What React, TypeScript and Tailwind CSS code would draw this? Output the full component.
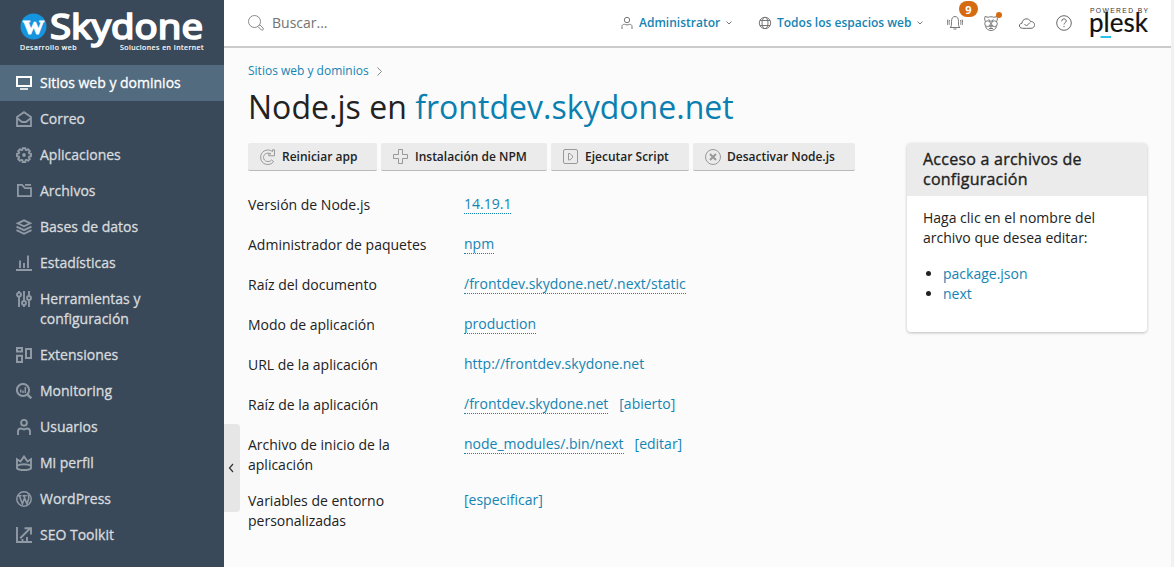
import type { ReactNode } from 'react';

type IconProps = { children: ReactNode; className?: string; size?: number };

function Icon({ children, className = '', size = 16 }: IconProps) {
  return (
    <svg width={size} height={size} viewBox={`0 0 ${size} ${size}`} fill="none" stroke="currentColor" className={`shrink-0 ${className}`}>
      {children}
    </svg>
  );
}

type NavItem = { label: string; icon: ReactNode; active?: boolean };

const navItems: NavItem[] = [
  {
    label: 'Sitios web y dominios',
    active: true,
    icon: (
      <>
        <path d="M1 2h14v9H1z" strokeWidth="2" />
        <path d="M4 14h8" strokeWidth="1.6" />
      </>
    ),
  },
  { label: 'Correo', icon: <path d="M1 6v9h14V6L8 1.2zM1.3 7.2 6 11h4l4.7-3.8" strokeWidth="1.8" /> },
  {
    label: 'Aplicaciones',
    icon: (
      <>
        <path d="M6.700 1.200h2.600l.3 1.700 1 .4 1.500-1 1.700 1.700-1 1.500.4 1 1.800.3v2.400l-1.800.4-.4 1 1 1.500-1.700 1.700-1.500-1-1 .4-.3 1.800H6.700l-.3-1.800-1-.4-1.500 1-1.700-1.700 1-1.500-.4-1L1 9.200V6.800l1.800-.3.4-1-1-1.500 1.700-1.700 1.500 1 1-.4z" strokeWidth="1.900" />
        <circle cx="8" cy="8" r="1.900" fill="currentColor" stroke="none" />
      </>
    ),
  },
  { label: 'Archivos', icon: <path d="M1.900 1.900H6l3 3.200h6v8.100H1.900zM9 1.900h6" strokeWidth="1.800" /> },
  {
    label: 'Bases de datos',
    icon: <path d="M1.700 4.300 8 1.300l6.300 3L8 7.300zM.5 7.600 8 11.200l7.500-3.600M.5 11.100 8 14.800l7.500-3.700" strokeWidth="1.900" />,
  },
  { label: 'Estadísticas', icon: <path d="M0 15h16M4 5.500v7.500M8 8v5M12 .5V13" strokeWidth="1.900" /> },
  {
    label: 'Herramientas y configuración',
    icon: (
      <g strokeWidth="1.900">
        <path d="M3 0v1M3 6v10M8 0v9.500M8 14.500V16M13 0v4M13 9.500V16" />
        <circle cx="3" cy="3.600" r="2" />
        <circle cx="8" cy="12" r="2" />
        <circle cx="13" cy="7" r="2" />
      </g>
    ),
  },
  { label: 'Extensiones', icon: <path d="M1 1h5v3.500H1zM1 8.800h5V15H1zM10 2h5v9h-5z" strokeWidth="2" /> },
  {
    label: 'Monitoring',
    icon: (
      <>
        <circle cx="7" cy="7" r="6.100" strokeWidth="2" />
        <path d="M11.300 11.300 15.300 15.300" strokeWidth="2.400" />
        <path d="M4.700 6.500V9.500M7 7.500v2.500M9.300 4v6" strokeWidth="1.500" />
      </>
    ),
  },
  {
    label: 'Usuarios',
    icon: (
      <>
        <circle cx="8" cy="3.800" r="2.900" strokeWidth="1.900" />
        <path d="M2 16v-3.500c0-2 1.200-3 3-3 1.200 0 1.500.8 3 .8s1.800-.8 3-.8c1.800 0 3 1 3 3V16" strokeWidth="1.900" />
      </>
    ),
  },
  {
    label: 'Mi perfil',
    icon: <path d="M1 4.300 4.500 6.500 8 1.500l3.500 5L15 4.300v9C13 15.600 3 15.600 1 13.300zM1.200 10.800c3-2 10.600-2 13.600 0" strokeWidth="1.900" />,
  },
  {
    label: 'WordPress',
    icon: (
      <>
        <circle cx="8" cy="8" r="7.200" strokeWidth="1.500" />
        <path d="M1.500 4.800h4M6.500 4.800h4.200M3.400 5l3 8L8.300 7.500M7.900 5l3 8 1.800-5.500c.6-1.800-.7-2.500-.5-4" strokeWidth="1.600" />
      </>
    ),
  },
  {
    label: 'SEO Toolkit',
    icon: <path d="M1 0v15h15M4.200 11.200 14 1.500M8.500 1.200H15V7.500M6.500 12v2M11 10v4" strokeWidth="1.900" />,
  },
];

function Sidebar() {
  return (
    <aside className="flex w-[224px] shrink-0 flex-col bg-[#3a4959]">
      <div className="flex h-[65px] shrink-0 flex-col pt-[12px] pl-[20px] text-white">
        <div className="flex h-[31px] items-start">
          <svg width="27" height="30" viewBox="0 0 27 30" className="shrink-0 overflow-visible">
            <circle cx="13.500" cy="14.500" r="13" fill="#1594e0" />
            <text x="3" y="21.500" fill="#fff" stroke="#fff" strokeWidth=".8" fontFamily="Liberation Serif, serif" fontWeight="700" fontSize="27" textLength="21" lengthAdjust="spacingAndGlyphs">w</text>
          </svg>
          <svg width="156" height="42" viewBox="0 0 156 42" className="ml-[3px] shrink-0 overflow-visible">
            <text x="0" y="27" fill="#fff" stroke="#fff" strokeWidth="1.700" fontFamily="Noto Sans, sans-serif" fontSize="34" textLength="153" lengthAdjust="spacingAndGlyphs">Skydone</text>
          </svg>
        </div>
        <div className="flex h-[10px] w-[184px] justify-between text-[7px] leading-[10px] [-webkit-text-stroke:0.2px]">
          <span className="whitespace-nowrap tracking-[0.55px]">Desarrollo web</span>
          <span className="whitespace-nowrap tracking-[0.5px]">Soluciones en Internet</span>
        </div>
      </div>
      <nav>
        {navItems.map((item) => (
          <a
            key={item.label}
            className={`flex gap-2 py-2 pr-8 pl-4 text-[14px] leading-5 [-webkit-text-stroke:0.3px] ${item.active ? 'bg-[#536b7e] text-white' : 'text-[#d8dbde]'}`}
          >
            <Icon className={`mt-[2px] ${item.active ? 'text-white' : 'text-[#909aa5]'}`}>{item.icon}</Icon>
            <span>{item.label}</span>
          </a>
        ))}
      </nav>
    </aside>
  );
}

function Chevron() {
  return (
    <svg width="6" height="4" viewBox="0 0 6 4" fill="none" stroke="#777" className="shrink-0">
      <path d="m.5.5 2.500 2.500L5.500.5" />
    </svg>
  );
}

function TopBar() {
  return (
    <header className="flex h-[48px] shrink-0 items-center border-b-2 border-[#cbcbcb] bg-white pl-6 text-[#737373]">
      <Icon className="text-[#8a8a8a]">
        <circle cx="6.500" cy="6.500" r="6" />
        <path d="m10.800 10.800 1-1 3.400 3.400c.9 1-.8 2.700-1.800 1.800L10 11.600" />
      </Icon>
      <span className="ml-2 text-[14px] leading-5">Buscar...</span>
      <div className="ml-auto flex w-[550px] items-center text-[12px] leading-5 font-semibold text-[#1484b3]">
        <svg width="12" height="14" viewBox="0 0 12 14" fill="none" stroke="#777" className="shrink-0">
          <circle cx="6" cy="4" r="2.700" />
          <path d="M1 13v-2.500C1 9 2 8.300 3.500 8.300c1 0 1.300.7 2.500.7s1.500-.7 2.500-.7c1.500 0 2.500.7 2.500 2.200V13" />
        </svg>
        <span className="ml-[6px] w-[82px] whitespace-nowrap">Administrator</span>
        <span className="ml-[5px]"><Chevron /></span>
        <svg width="14" height="14" viewBox="0 0 14 14" fill="none" stroke="#777" className="ml-[26px] shrink-0">
          <circle cx="7" cy="7" r="5.700" />
          <ellipse cx="7" cy="7" rx="3" ry="5.700" />
          <path d="M2 4.500h10M2 9.500h10" />
        </svg>
        <span className="ml-[5px] w-[135px] whitespace-nowrap">Todos los espacios web</span>
        <span className="ml-[5px]"><Chevron /></span>
        <span className="relative ml-[24px] text-[#666]">
          <Icon>
            <path d="M3 12.500c1.500-1 1.500-2 1.500-6C4.500 3 6 1.500 8 1.500s3.500 1.500 3.500 5c0 4 0 5 1.500 6zM6.500 14h3M2.500 5c-.6 1.500-.6 3 0 4.500M13.500 5c.6 1.500.6 3 0 4.500M.9 4.500c-.7 2-.7 3.500 0 5.500M15.100 4.500c.7 2 .7 3.500 0 5.500" strokeWidth=".9" />
          </Icon>
          <span className="absolute -top-[14px] left-[12px] flex h-4 w-[19px] items-center justify-center rounded-full bg-[#d66a10] text-[11px] leading-none font-bold text-white">9</span>
        </span>
        <span className="relative ml-[20px] text-[#666]">
          <Icon>
            <path d="M2.300 6.500C1.500 4.500 1.500 3 2 1.500L5 2.300c2-.7 4-.7 6 0l3-.8c.5 1.500.5 3-.3 5M5.500 4.500l2.500 2 2.500-2M2.500 11.300C3 14 5.500 15.500 8 15.500s5-1.500 5.500-4.200M6.500 10.800h3L8 12.500zM6 13.500h4" strokeWidth=".9" />
            <circle cx="4.600" cy="8.700" r="2.900" strokeWidth=".9" />
            <circle cx="11.400" cy="8.700" r="2.900" strokeWidth=".9" />
          </Icon>
          <span className="absolute -top-[3px] left-[13px] h-[6px] w-[6px] rounded-full bg-[#d66a10]" />
        </span>
        <Icon className="ml-[20px] text-[#666]">
          <path d="M7.500 13.300h-4c-4 0-4-5-.5-5 0-5 7-6 8.500-1.800 5-.5 5.500 6.800.5 6.800H7.500M5.500 9l2 2 3.500-3.500" />
        </Icon>
        <Icon className="ml-[21px] text-[#666]">
          <circle cx="8" cy="8" r="7.300" />
          <path d="M5.700 6.300C5.700 3 10.300 3.300 10.300 6 10.300 7.500 8 7.700 8 9.500M8 11v1.200" />
        </Icon>
        <div className="ml-[18px] flex h-[36px] w-[60px] shrink-0 flex-col">
          <svg width="60" height="8" viewBox="0 0 60 8">
            <text x="0" y="7.500" fill="#333" fontFamily="Liberation Sans, sans-serif" fontSize="6.700" fontWeight="400" textLength="58">POWERED BY</text>
          </svg>
          <svg width="60" height="28" viewBox="0 0 60 28" className="overflow-visible">
            <text x="-1" y="18.500" fill="#111" stroke="#111" strokeWidth=".2" fontFamily="Lato, sans-serif" fontSize="26" fontWeight="400" textLength="59">plesk</text>
            <path d="M10.500 24h10.500" stroke="#28c3ec" strokeWidth="2" />
          </svg>
        </div>
      </div>
    </header>
  );
}

type ActionProps = { label: string; width: string; icon: ReactNode };

function Action({ label, width, icon }: ActionProps) {
  return (
    <button className={`flex h-[28px] items-center gap-[6px] rounded-[2px] border-b border-[#b9b9b9] bg-[#ebebeb] pl-3 text-[12px] font-semibold text-[#222] ${width}`}>
      <Icon className="text-[#999]">{icon}</Icon>
      <span className="whitespace-nowrap">{label}</span>
    </button>
  );
}

type Row = { label: string; value: string; dotted?: boolean; extra?: string; tall?: boolean };

const rows: Row[] = [
  { label: 'Versión de Node.js', value: '14.19.1', dotted: true },
  { label: 'Administrador de paquetes', value: 'npm', dotted: true },
  { label: 'Raíz del documento', value: '/frontdev.skydone.net/.next/static', dotted: true },
  { label: 'Modo de aplicación', value: 'production', dotted: true },
  { label: 'URL de la aplicación', value: 'http://frontdev.skydone.net' },
  { label: 'Raíz de la aplicación', value: '/frontdev.skydone.net', dotted: true, extra: '[abierto]' },
  { label: 'Archivo de inicio de la aplicación', value: 'node_modules/.bin/next', dotted: true, extra: '[editar]', tall: true },
  { label: 'Variables de entorno personalizadas', value: '[especificar]', tall: true },
];

function Settings() {
  return (
    <dl className="mt-[24px] text-[14px] leading-5">
      {rows.map((row) => (
        <div key={row.label} className={`flex ${row.tall ? 'h-14' : 'h-10'}`}>
          <dt className="w-[216px] shrink-0 pr-12 whitespace-nowrap text-[#222]">
            <span className={row.tall ? 'block w-[160px] whitespace-normal' : ''}>{row.label}</span>
          </dt>
          <dd className="-mt-px flex items-start gap-[11px] whitespace-nowrap text-[#1484b3]">
            <a className={row.dotted ? 'h-[20px] border-b border-dotted border-[#1484b3]' : ''}>{row.value}</a>
            {row.extra && <a>{row.extra}</a>}
          </dd>
        </div>
      ))}
    </dl>
  );
}

function ConfigCard() {
  return (
    <section className="mt-[95px] ml-[52px] h-[189px] w-[240px] shrink-0 overflow-hidden rounded-[4px] bg-white text-[#222] shadow-[0_1px_3px_rgba(0,0,0,0.25)]">
      <h2 className="h-[53px] bg-[#ebebeb] px-4 pt-[6px] text-[16px] leading-5 tracking-[0.24px] [-webkit-text-stroke:0.35px]">Acceso a archivos de configuración</h2>
      <div className="px-4 pt-3 text-[14px] leading-5">
        <p>Haga clic en el nombre del archivo que desea editar:</p>
        <ul className="mt-4 list-disc pl-5">
          <li><a className="text-[#1484b3]">package.json</a></li>
          <li><a className="text-[#1484b3]">next</a></li>
        </ul>
      </div>
    </section>
  );
}

export default function App() {
  return (
    <div className="flex h-[567px] w-[1174px] overflow-hidden bg-[#fbfbfb] font-['Open_Sans',sans-serif]">
      <Sidebar />
      <div className="flex w-[947px] shrink-0 flex-col">
        <TopBar />
        <main className="flex flex-1 items-start">
          <div className="mt-[376px] flex h-[88px] w-4 shrink-0 items-center justify-center rounded-r-[4px] bg-[#e6e6e6]">
            <svg width="6" height="10" viewBox="0 0 6 10" fill="none" stroke="#333" strokeWidth="1.200" className="mr-[2px]">
              <path d="M5 1 1.500 5 5 9" />
            </svg>
          </div>
          <div className="ml-2 w-[607px] shrink-0 pt-[13px]">
            <div className="flex items-center gap-2 text-[12px] leading-5 text-[#1484b3]">
              <a>Sitios web y dominios</a>
              <svg width="5" height="9" viewBox="0 0 5 9" fill="none" stroke="#888">
                <path d="m.5.5 4 4-4 4" />
              </svg>
            </div>
            <h1 className="mt-[6px] text-[32px] leading-10 tracking-[0.03px] whitespace-nowrap text-[#222]">
              Node.js en <a className="text-[#0a7fb0]">frontdev.skydone.net</a>
            </h1>
            <div className="mt-[16px] flex gap-1">
              <Action
                label="Reiniciar app"
                width="w-[129px]"
                icon={<path d="M14.500.8v6H8.800V4.800h2C7 3 3.500 5 3.500 8.500c.2 4 5.500 5.500 8 2.500l2.200 1.600C9.500 18 1 15.500.7 9-.2 3 7-1.500 12.500 2.500V.8z" />}
              />
              <Action label="Instalación de NPM" width="w-[166px]" icon={<path d="M5.500.5h4v5h5v4h-5v5h-4v-5h-5v-4h5z" />} />
              <Action
                label="Ejecutar Script"
                width="w-[138px]"
                icon={
                  <>
                    <rect x=".5" y=".5" width="14" height="14" rx="1.500" />
                    <path d="M5.500 4.500v6.500H7L9.500 8.500V7L7 4.500z" />
                  </>
                }
              />
              <Action
                label="Desactivar Node.js"
                width="w-[162px]"
                icon={
                  <>
                    <circle cx="8" cy="8" r="7.500" />
                    <path d="m5 5 6 6M11 5l-6 6" strokeWidth="2" />
                  </>
                }
              />
            </div>
            <Settings />
          </div>
          <ConfigCard />
        </main>
      </div>
      <div className="w-[3px] shrink-0 bg-[#f1f1f1]" />
    </div>
  );
}
